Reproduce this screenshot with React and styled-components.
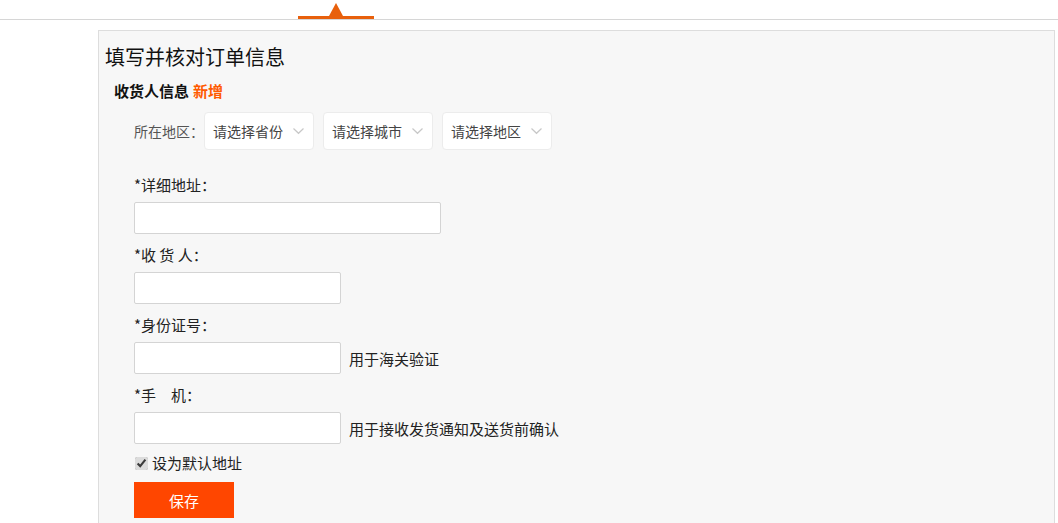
import styled, { createGlobalStyle } from "styled-components";

const GlobalStyle = createGlobalStyle`
  html, body {
    margin: 0;
    padding: 0;
    background: #fff;
    font-family: "Noto Sans CJK SC", "Noto Sans", sans-serif;
    color: #333;
  }
`;

const TopNav = styled.div`
  display: flex;
  align-items: flex-end;
  height: 19px;
  padding-left: 298px;
  border-bottom: 1px solid #d6d6d6;
`;

const ActiveTab = styled.div`
  position: relative;
  width: 76px;
  height: 3px;
  background: #e8600c;

  &::after {
    content: "";
    position: absolute;
    left: 31px;
    bottom: 3px;
    border-left: 7px solid transparent;
    border-right: 7px solid transparent;
    border-bottom: 13px solid #e8600c;
  }
`;

const Panel = styled.div`
  margin: 10px 0 0 98px;
  width: 957px;
  min-height: 520px;
  background: #f7f7f7;
  border: 1px solid #ddd;
  box-sizing: border-box;
  padding: 12px 0 0 6px;
`;

const Title = styled.h1`
  margin: 0;
  font-size: 20px;
  font-weight: normal;
  line-height: 28px;
  color: #111;
`;

const SectionTitle = styled.h2`
  margin: 10px 0 0 9px;
  font-size: 15px;
  font-weight: bold;
  line-height: 20px;
  color: #111;
`;

const AddLink = styled.span`
  color: #ff5a00;
  margin-left: 4px;
  cursor: pointer;
`;

const Form = styled.div`
  padding: 11px 0 0 29px;
`;

const RegionRow = styled.div`
  display: flex;
  align-items: center;
  gap: 9px;
`;

const RegionLabel = styled.span`
  font-size: 14px;
  color: #555;
  margin-right: -9px;
`;

const Select = styled.div`
  display: flex;
  align-items: center;
  justify-content: space-between;
  width: 110px;
  height: 38px;
  box-sizing: border-box;
  padding: 0 8px 0 8px;
  background: #fff;
  border: 1px solid #ececec;
  border-radius: 4px;
  font-size: 14px;
  color: #444;
`;

const Field = styled.div`
  margin-top: ${(p) => p.$top}px;
`;

const Label = styled.div`
  font-size: 15px;
  line-height: 20px;
  color: #222;
  margin-bottom: 7px;
  white-space: pre;
`;

const InputRow = styled.div`
  display: flex;
  align-items: center;
  gap: 8px;
`;

const Input = styled.input`
  width: ${(p) => p.$w}px;
  height: 32px;
  box-sizing: border-box;
  border: 1px solid #d4d4d4;
  border-radius: 2px;
  background: #fff;
  outline: none;
  padding: 0 6px;
  font-size: 14px;
`;

const Hint = styled.span`
  font-size: 15px;
  color: #222;
`;

const CheckRow = styled.label`
  display: flex;
  align-items: center;
  gap: 4px;
  margin-top: 9px;
  font-size: 15px;
  line-height: 20px;
  color: #222;
`;

const Check = styled.input`
  margin: 0 0 0 1px;
  width: 13px;
  height: 13px;
  accent-color: #dcdcdc;
`;

const SaveButton = styled.button`
  margin-top: 9px;
  width: 100px;
  height: 36px;
  border: none;
  background: #ff4600;
  color: #fff;
  font-family: inherit;
  font-size: 15px;
  cursor: pointer;
`;

function Chevron() {
  return (
    <svg width="13" height="8" viewBox="0 0 13 8" fill="none">
      <path d="M1.5 1.5 L6.5 6.3 L11.5 1.5" stroke="#c8c8c8" strokeWidth="1.2" />
    </svg>
  );
}

export default function App() {
  return (
    <>
      <GlobalStyle />
      <TopNav>
        <ActiveTab />
      </TopNav>
      <Panel>
        <Title>填写并核对订单信息</Title>
        <SectionTitle>
          收货人信息<AddLink>新增</AddLink>
        </SectionTitle>
        <Form>
          <RegionRow>
            <RegionLabel>所在地区：</RegionLabel>
            <Select>
              请选择省份 <Chevron />
            </Select>
            <Select>
              请选择城市 <Chevron />
            </Select>
            <Select>
              请选择地区 <Chevron />
            </Select>
          </RegionRow>
          <Field $top={25}>
            <Label>*详细地址：</Label>
            <Input $w={307} />
          </Field>
          <Field $top={11}>
            <Label>*收 货 人：</Label>
            <Input $w={207} />
          </Field>
          <Field $top={11}>
            <Label>*身份证号：</Label>
            <InputRow>
              <Input $w={207} />
              <Hint>用于海关验证</Hint>
            </InputRow>
          </Field>
          <Field $top={11}>
            <Label>*手　机：</Label>
            <InputRow>
              <Input $w={207} />
              <Hint>用于接收发货通知及送货前确认</Hint>
            </InputRow>
          </Field>
          <CheckRow>
            <Check type="checkbox" defaultChecked />
            设为默认地址
          </CheckRow>
          <SaveButton>保存</SaveButton>
        </Form>
      </Panel>
    </>
  );
}
